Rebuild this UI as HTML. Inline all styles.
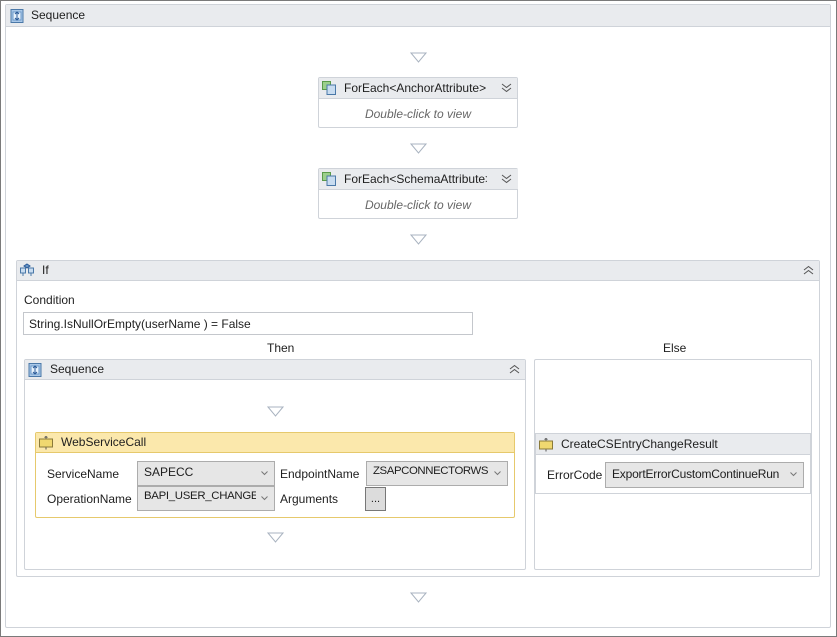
<!DOCTYPE html>
<html><head><style>
*{box-sizing:border-box;margin:0;padding:0}
body{width:837px;height:637px;position:relative;background:#fff;font-family:"Liberation Sans",sans-serif;font-size:12px;color:#1e1e1e;overflow:hidden}
.a{position:absolute}
.box{position:absolute;border:1px solid #cfd3d9;background:#fff;border-radius:2px}
.hdr{position:absolute;left:0;right:0;top:0;background:#e9ebee;border-bottom:1px solid #cfd3d9}
.yh{background:#fbe8ac;border-bottom:1px solid #e6c96c}
.t{position:absolute;font-size:12px;white-space:nowrap}
.combo{position:absolute;background:#e6e6e6;border:1px solid #acacac;font-size:12px;padding:3px 0 0 6px;white-space:nowrap;overflow:hidden}
.combo span{display:block;overflow:hidden;margin-right:18px}
.combo svg{position:absolute;right:6px;top:9px}
.ico{position:absolute;width:14px;height:14px}
.chev{position:absolute;right:5px;top:4px}
</style></head><body>
<div class="a" style="left:0;top:0;width:837px;height:637px;border:1px solid #7a7a7a"></div>

<div class="box" style="left:5px;top:4px;width:826px;height:624px">
 <div class="hdr" style="height:22px"></div>
 <svg class="ico" style="left:4px;top:4px" viewBox="0 0 14 14"><rect x="1" y="0.5" width="12" height="13" fill="#aac8e8" stroke="#4a78a8"/><rect x="3" y="3" width="8" height="8" fill="#e8f2fc" stroke="#6a98c8"/><path d="M7 3v8M5 5l2-2 2 2M5 9l2 2 2-2" stroke="#2a5a98" fill="none"/></svg>
 <div class="t" style="left:25px;top:3px">Sequence</div>
</div>

<svg class="a" style="left:410px;top:52px" width="17" height="11"><path d="M1 1h15L8.5 10z" fill="none" stroke="#a9b3c0"/></svg>

<div class="box" style="left:318px;top:77px;width:200px;height:51px">
 <div class="hdr" style="height:21px"></div>
 <svg class="ico" style="left:3px;top:3px" viewBox="0 0 14 14"><rect x="0.5" y="0.5" width="8" height="8" fill="#9ccf8c" stroke="#5a9a4a"/><rect x="5" y="4" width="8.5" height="9.5" fill="#c8dcf0" stroke="#4a78a8"/></svg>
 <div class="t" style="left:25px;top:3px">ForEach&lt;AnchorAttribute&gt;</div>
 <svg class="chev" width="11" height="11"><path d="M1 2l4.5 3.5L10 2M1 6l4.5 3.5L10 6" fill="none" stroke="#555"/></svg>
 <div class="t" style="left:0;right:0;top:29px;text-align:center;font-style:italic;color:#666">Double-click to view</div>
</div>
<svg class="a" style="left:410px;top:143px" width="17" height="11"><path d="M1 1h15L8.5 10z" fill="none" stroke="#a9b3c0"/></svg>
<div class="box" style="left:318px;top:168px;width:200px;height:51px">
 <div class="hdr" style="height:21px"></div>
 <svg class="ico" style="left:3px;top:3px" viewBox="0 0 14 14"><rect x="0.5" y="0.5" width="8" height="8" fill="#9ccf8c" stroke="#5a9a4a"/><rect x="5" y="4" width="8.5" height="9.5" fill="#c8dcf0" stroke="#4a78a8"/></svg>
 <div class="t" style="left:25px;top:3px">ForEach&lt;SchemaAttribute&gt;</div>
 <div class="a" style="left:168px;top:0;width:31px;height:20px;background:#e9ebee"></div>
 <svg class="chev" width="11" height="11"><path d="M1 2l4.5 3.5L10 2M1 6l4.5 3.5L10 6" fill="none" stroke="#555"/></svg>
 <div class="t" style="left:0;right:0;top:29px;text-align:center;font-style:italic;color:#666">Double-click to view</div>
</div>
<svg class="a" style="left:410px;top:234px" width="17" height="11"><path d="M1 1h15L8.5 10z" fill="none" stroke="#a9b3c0"/></svg>

<div class="box" style="left:16px;top:260px;width:804px;height:317px">
 <div class="hdr" style="height:20px"></div>
 <svg class="ico" style="left:3px;top:2px" viewBox="0 0 14 14"><path d="M7 1l3 2-3 2-3-2z" fill="#6a98c8" stroke="#2a5a98"/><rect x="0.5" y="5" width="5" height="5" fill="#c8dcf0" stroke="#4a78a8"/><rect x="8.5" y="5" width="5" height="5" fill="#c8dcf0" stroke="#4a78a8"/><path d="M3 10v3M11 10v3" stroke="#4a78a8"/></svg>
 <div class="t" style="left:25px;top:2px">If</div>
 <svg class="chev" width="11" height="11"><path d="M1 5l4.5-3.5L10 5M1 9l4.5-3.5L10 9" fill="none" stroke="#555"/></svg>
 <div class="t" style="left:7px;top:32px">Condition</div>
 <div class="a" style="left:6px;top:51px;width:450px;height:23px;border:1px solid #c4c7cc;padding:4px 5px;white-space:nowrap">String.IsNullOrEmpty(userName ) = False</div>
 <div class="t" style="left:250px;top:80px">Then</div>
 <div class="t" style="left:646px;top:80px">Else</div>
</div>

<div class="box" style="left:24px;top:359px;width:502px;height:211px">
 <div class="hdr" style="height:20px"></div>
 <svg class="ico" style="left:3px;top:3px" viewBox="0 0 14 14"><rect x="1" y="0.5" width="12" height="13" fill="#aac8e8" stroke="#4a78a8"/><rect x="3" y="3" width="8" height="8" fill="#e8f2fc" stroke="#6a98c8"/><path d="M7 3v8M5 5l2-2 2 2M5 9l2 2 2-2" stroke="#2a5a98" fill="none"/></svg>
 <div class="t" style="left:25px;top:2px">Sequence</div>
 <svg class="chev" width="11" height="11"><path d="M1 5l4.5-3.5L10 5M1 9l4.5-3.5L10 9" fill="none" stroke="#555"/></svg>
</div>
<svg class="a" style="left:267px;top:406px" width="17" height="11"><path d="M1 1h15L8.5 10z" fill="none" stroke="#a9b3c0"/></svg>
<svg class="a" style="left:267px;top:532px" width="17" height="11"><path d="M1 1h15L8.5 10z" fill="none" stroke="#a9b3c0"/></svg>

<div class="box" style="left:35px;top:432px;width:480px;height:86px;border-color:#e6c96c">
 <div class="hdr yh" style="height:20px"></div>
 <svg class="ico" style="left:3px;top:3px" viewBox="0 0 14 14"><rect x="0.5" y="3" width="13" height="8" fill="#f0d870" stroke="#8a7a3a"/><path d="M7 0.5v2M5.5 1.5l1.5-1 1.5 1M7 11.5v2" stroke="#555" fill="none"/></svg>
 <div class="t" style="left:25px;top:2px">WebServiceCall</div>
 <div class="t" style="left:11px;top:34px">ServiceName</div>
 <div class="t" style="left:11px;top:59px">OperationName</div>
 <div class="t" style="left:244px;top:34px">EndpointName</div>
 <div class="t" style="left:244px;top:59px">Arguments</div>
</div>
<div class="combo" style="left:137px;top:461px;width:138px;height:25px"><span>SAPECC</span><svg width="7" height="5"><path d="M0.5 0.5l3 3 3-3" fill="none" stroke="#777"/></svg></div>
<div class="combo" style="left:137px;top:486px;width:138px;height:25px;font-size:11.4px;letter-spacing:-0.3px"><span>BAPI_USER_CHANGE</span><svg width="7" height="5"><path d="M0.5 0.5l3 3 3-3" fill="none" stroke="#777"/></svg></div>
<div class="combo" style="left:366px;top:461px;width:142px;height:25px;font-size:11.4px;letter-spacing:-0.4px"><span>ZSAPCONNECTORWS</span><svg width="7" height="5"><path d="M0.5 0.5l3 3 3-3" fill="none" stroke="#777"/></svg></div>
<div class="a" style="left:365px;top:487px;width:21px;height:24px;background:#dcdcdc;border:1px solid #777;text-align:center;font-size:11px;line-height:22px">...</div>

<div class="box" style="left:534px;top:359px;width:278px;height:211px"></div>
<div class="box" style="left:535px;top:433px;width:276px;height:61px;border-radius:0">
 <div class="hdr" style="height:21px"></div>
 <svg class="ico" style="left:3px;top:4px" viewBox="0 0 14 14"><rect x="0.5" y="3" width="13" height="8" fill="#f0d870" stroke="#8a7a3a"/><path d="M7 0.5v2M5.5 1.5l1.5-1 1.5 1M7 11.5v2" stroke="#555" fill="none"/></svg>
 <div class="t" style="left:25px;top:3px">CreateCSEntryChangeResult</div>
 <div class="t" style="left:11px;top:34px">ErrorCode</div>
</div>
<div class="combo" style="left:605px;top:462px;width:199px;height:26px;padding-top:4px;letter-spacing:-0.2px"><span>ExportErrorCustomContinueRun</span><svg width="7" height="5"><path d="M0.5 0.5l3 3 3-3" fill="none" stroke="#777"/></svg></div>

<svg class="a" style="left:410px;top:592px" width="17" height="11"><path d="M1 1h15L8.5 10z" fill="none" stroke="#a9b3c0"/></svg>
</body></html>
